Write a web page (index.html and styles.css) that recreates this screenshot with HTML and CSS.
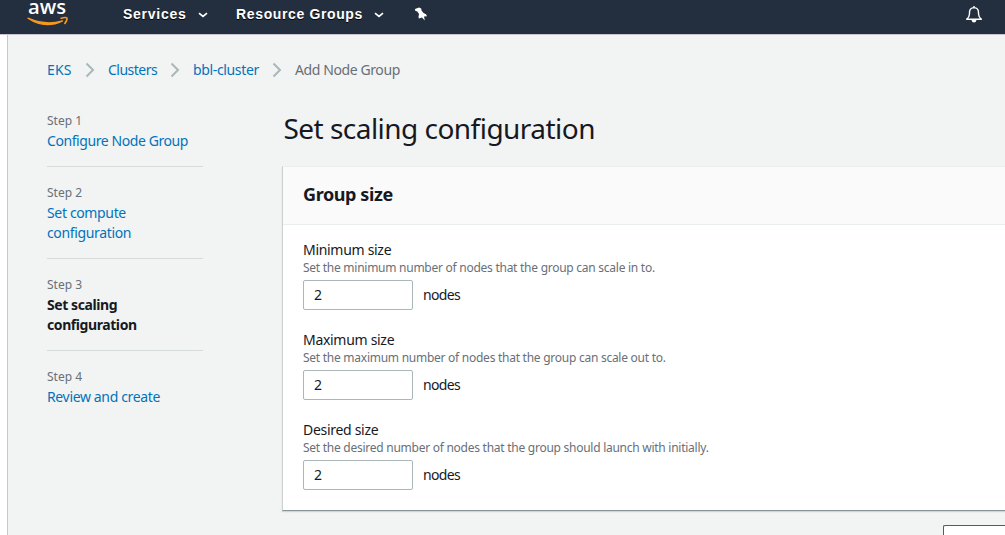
FILE: index.html
```html
<!DOCTYPE html>
<html lang="en">
<head>
<meta charset="utf-8">
<title>Add Node Group</title>
<link rel="stylesheet" href="styles.css">
</head>
<body>
<header class="topbar">
  <svg class="logo" width="42" height="28" viewBox="0 0 42 28" role="img" aria-label="aws">
    <text class="logo-text" x="1" y="14" textLength="38" lengthAdjust="spacingAndGlyphs">aws</text>
    <path d="M1 18.2 Q18 29.500 35.500 20.800 Q19 26 1 18.200Z" fill="#f7981f" stroke="#f7981f" stroke-width="1.300" stroke-linejoin="round"/>
    <path d="M33.500 18.500 Q38.500 17 40 18 Q40.400 20.500 37.500 24" fill="none" stroke="#f7981f" stroke-width="1.500"/>
  </svg>
  <nav class="menus">
    <a class="menu services"><span>Services</span><svg class="caret" width="10" height="6" viewBox="0 0 10 6"><path d="M1 1.200 5 4.500 9 1.200"/></svg></a>
    <a class="menu groups"><span>Resource Groups</span><svg class="caret" width="10" height="6" viewBox="0 0 10 6"><path d="M1 1.200 5 4.500 9 1.200"/></svg></a>
    <svg class="pin" width="14" height="15" viewBox="0 0 14 15"><path d="M5 .5 7.200 1.500 7.500 3.500 9.500 6 12 7.200 13 9.200 10 9.600 10.800 13.500 8 10.400 4.800 11.500 4.500 9.800 5 7 3.300 4.500 1.200 3.800 1 2Z" fill="#fff"/></svg>
  </nav>
  <svg class="bell" width="18" height="18" viewBox="0 0 18 18"><path d="M1.700 14.200H16.300Q13.800 12.600 13.500 9V7Q13.300 2.900 9 2.600 4.700 2.900 4.500 7V9Q4.200 12.600 1.700 14.200ZM9 2.600V1" fill="none" stroke="#fff" stroke-width="1.4" stroke-linejoin="round"/><path d="M6.500 15H11.500Q11 17.500 9 17.500T6.500 15Z" fill="#fff"/></svg>
</header>
<div class="page">
  <nav class="crumbs">
    <a class="c1">EKS</a><svg class="sep" width="10" height="16" viewBox="0 0 10 16"><path d="M1.500 1.500 8 8 1.500 14.500"/></svg>
    <a class="c2">Clusters</a><svg class="sep" width="10" height="16" viewBox="0 0 10 16"><path d="M1.500 1.500 8 8 1.500 14.500"/></svg>
    <a class="c3">bbl-cluster</a><svg class="sep" width="10" height="16" viewBox="0 0 10 16"><path d="M1.500 1.500 8 8 1.500 14.500"/></svg>
    <span class="here">Add Node Group</span>
  </nav>
  <div class="columns">
    <ol class="steps">
      <li><small>Step 1</small><a class="s1">Configure Node Group</a></li>
      <li><small>Step 2</small><a>Set compute<br>configuration</a></li>
      <li><small>Step 3</small><strong>Set scaling<br>configuration</strong></li>
      <li><small>Step 4</small><a>Review and create</a></li>
    </ol>
    <main class="main">
      <h1>Set scaling configuration</h1>
      <section class="card">
        <h2>Group size</h2>
        <div class="fields">
          <div class="field"><label>Minimum size</label><p>Set the minimum number of nodes that the group can scale in to.</p><div class="row"><span class="input">2</span><span class="unit">nodes</span></div></div>
          <div class="field"><label>Maximum size</label><p>Set the maximum number of nodes that the group can scale out to.</p><div class="row"><span class="input">2</span><span class="unit">nodes</span></div></div>
          <div class="field"><label>Desired size</label><p>Set the desired number of nodes that the group should launch with initially.</p><div class="row"><span class="input">2</span><span class="unit">nodes</span></div></div>
        </div>
      </section>
      <div class="actions"><span class="button"></span></div>
    </main>
  </div>
</div>
</body>
</html>
```
FILE: styles.css
```css
* { box-sizing: border-box; }
body { margin: 0; height: 535px; overflow: hidden; background: #fff; color: #16191f; font: 14px/20px "Noto Sans", sans-serif; letter-spacing: -.3px; }
.topbar { height: 35px; display: flex; align-items: flex-start; background: #232f3e; border-bottom: 1px solid #c9c5d0; padding-left: 27px; }
.logo { flex: none; overflow: visible; }
.logo-text { font: 600 20px "Open Sans", sans-serif; fill: #fff; letter-spacing: 0; }
.menus { display: flex; height: 28px; align-items: center; margin-left: 54px; flex: 1; }
.menu { display: flex; align-items: center; color: #fff; font: bold 14px/20px "Liberation Sans", Arial, sans-serif; letter-spacing: .62px; text-shadow: 0 1px 0 #000; }
.groups { margin-left: 28.5px; }
.caret { margin: 2px 0 0 11px; }
.groups .caret { margin-left: 11px; }
.caret path { fill: none; stroke: #fff; stroke-width: 1.7; }
.services span { letter-spacing: .75px; }
.pin { margin-left: 30px; }
.bell { margin: 5px 22px 0 0; }
.page { margin-left: 7px; height: 500px; background: #f2f3f3; border-left: 1px solid #c4c9c9; padding: 25px 0 0 39px; overflow: hidden; }
.crumbs { display: flex; align-items: center; height: 20px; white-space: nowrap; }
.c1 { width: 25px; letter-spacing: .2px; }
.c2 { width: 49px; letter-spacing: -.5px; }
.c3 { width: 66px; letter-spacing: -.35px; }
.sep { margin: 0 13px; flex: none; }
.sep path { fill: none; stroke: #aab7b8; stroke-width: 2; }
a { color: #0073bb; }
.here { color: #687078; letter-spacing: -.4px; }
.columns { display: flex; margin-top: 15px; }
.steps { list-style: none; margin: 16px 79px 0 0; padding: 0; width: 156px; flex: none; }
.steps li { padding-bottom: 15px; border-bottom: 1px solid #d5dbdb; margin-bottom: 16px; }
.steps li:last-child { border: 0; }
.steps small { display: block; font-size: 12px; line-height: 20px; color: #687078; letter-spacing: 0; }
.steps a, .steps strong { display: block; white-space: nowrap; letter-spacing: -.35px; }
.steps .s1 { letter-spacing: -.42px; }
.steps strong { letter-spacing: -.42px; }
.main { flex: 1; min-width: 0; }
h1 { margin: 15px 0 0 1.5px; font-size: 28px; line-height: 36px; font-weight: 400; letter-spacing: -.53px; white-space: nowrap; }
.card { margin-top: 20px; height: 345px; background: #fff; border: solid; border-width: 1px 0 1px 1px; border-color: #eaeded #fff #879596 #cbd1d1; box-shadow: 0 1px 1px #d0d6d6; }
h2 { margin: 0; height: 58px; padding: 0 20px; background: #fafafa; border-bottom: 1px solid #eaeded; font-size: 18px; line-height: 55px; font-weight: 700; letter-spacing: -.4px; }
.fields { padding: 15px 20px; }
.field { height: 90px; }
.field label { display: block; line-height: 20px; }
.field p { margin: 0; font-size: 12px; line-height: 16px; color: #687078; white-space: nowrap; letter-spacing: -.26px; }
.row { display: flex; align-items: center; gap: 10px; margin-top: 4px; }
.unit { letter-spacing: -.65px; }
.input { width: 110px; height: 30px; border: 1px solid #aab7b8; border-radius: 2px; padding: 4px 10px; background: #fff; }
.actions { display: flex; justify-content: flex-end; padding-top: 14px; }
.button { width: 62px; height: 32px; background: #fff; border: solid #545b64; border-width: 1px 0 1px 1px; border-radius: 2px 0 0 2px; }
```
